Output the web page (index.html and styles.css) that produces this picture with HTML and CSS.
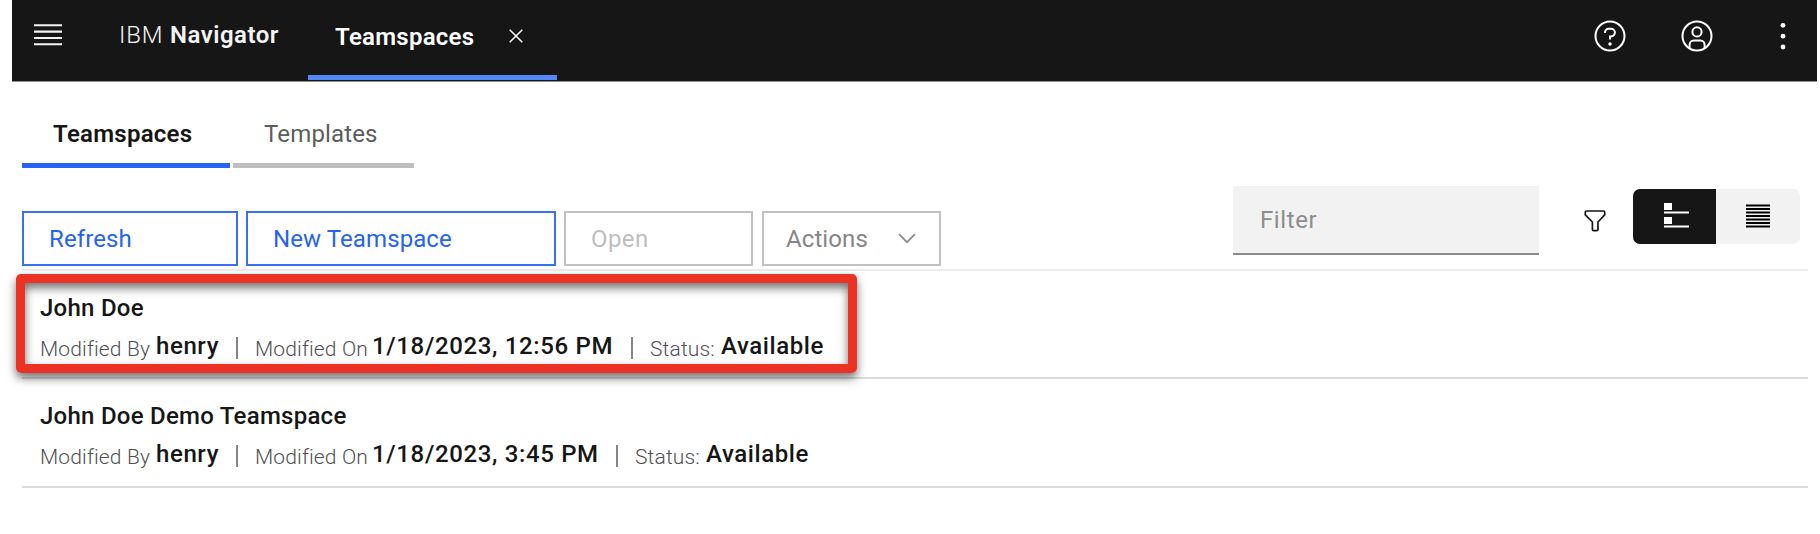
FILE: index.html
```html
<!DOCTYPE html>
<html lang="en">
<head>
<meta charset="utf-8">
<title>IBM Navigator</title>
<link rel="stylesheet" href="styles.css">
</head>
<body>
<header class="header">
  <svg class="menu" width="28" height="22" viewBox="0 0 28 22"><path d="M0 1.3h28M0 7.6h28M0 14h28M0 20.2h28" stroke="#f4f4f4" stroke-width="2.1"/></svg>
  <div class="brand"><span class="ibm">IBM</span><span class="product">Navigator</span></div>
  <div class="app-tab"><span class="app-name">Teamspaces</span>
    <svg width="14" height="14" viewBox="0 0 14 14"><path d="M.7.7l12.6 12.6M13.3.7L.7 13.3" stroke="#fff" stroke-width="1.5"/></svg>
  </div>
  <nav class="tools">
    <svg width="32" height="32" viewBox="0 0 32 32" fill="none" stroke="#fff" stroke-width="2"><circle cx="16" cy="16" r="14.5"/><path d="M11 13v-.5A3.7 3.7 0 0 1 14.7 8.8h2.4a3.8 3.8 0 0 1 0 7.6H16v3.2"/><circle cx="16" cy="24" r="1.7" fill="#fff" stroke="none"/></svg>
    <svg width="32" height="32" viewBox="0 0 32 32" fill="none" stroke="#fff" stroke-width="2"><circle cx="16" cy="16" r="14.5"/><circle cx="16" cy="11.9" r="4.6"/><path d="M8.6 28v-3.2a4.2 4.2 0 0 1 4.2-4.2h6.6a4.2 4.2 0 0 1 4.2 4.2V28"/></svg>
    <svg width="32" height="32" viewBox="0 0 32 32" fill="#fff"><circle cx="16" cy="5.3" r="2.4"/><circle cx="16" cy="16.2" r="2.4"/><circle cx="16" cy="27" r="2.4"/></svg>
  </nav>
</header>
<main class="content">
  <div class="tabs"><div class="tab active"><span>Teamspaces</span></div><div class="tab"><span>Templates</span></div></div>
  <div class="toolbar">
    <div class="buttons">
      <button class="btn refresh"><span>Refresh</span></button>
      <button class="btn create"><span>New Teamspace</span></button>
      <button class="btn open"><span>Open</span></button>
      <button class="btn actions"><span>Actions</span><svg width="18" height="11" viewBox="0 0 18 11"><path d="M1 1.2l8 8 8-8" fill="none" stroke="#8d8d8d" stroke-width="1.8"/></svg></button>
    </div>
    <div class="filter"><span>Filter</span></div>
    <svg class="funnel" width="22" height="22" viewBox="0 0 22 22"><path d="M2.5 1h17a1.2 1.2 0 0 1 1.2 1.2v2.7L14 12v7.5a1.2 1.2 0 0 1-1.2 1.2H9.6a1.2 1.2 0 0 1-1.2-1.2V12L1.3 4.9V2.2A1.2 1.2 0 0 1 2.5 1z" fill="none" stroke="#161616" stroke-width="1.7"/></svg>
    <div class="switch">
      <div class="seg on"><svg width="26" height="26" viewBox="0 0 26 26" fill="#fff"><path d="M0 0h8v7H0zM0 8.5h25v2H0zM0 14h8v7H0zM0 22.5h25v2H0z"/></svg></div>
      <div class="seg"><svg width="24" height="24" viewBox="0 0 24 24"><path d="M0 1.5h24M0 5h24M0 8.5h24M0 12h24M0 15.5h24M0 19h24M0 22.5h24" stroke="#000" stroke-width="1.9"/></svg></div>
    </div>
  </div>
  <section class="list">
    <article class="row marked">
      <h2>John Doe</h2>
      <p><small class="by">Modified By</small><b class="who">henry</b><i></i><small class="mo">Modified On</small><b class="d1">1/18/2023, 12:56 PM</b><i></i><small class="st">Status:</small><b class="av">Available</b></p>
    </article>
    <article class="row">
      <h2>John Doe Demo Teamspace</h2>
      <p><small class="by">Modified By</small><b class="who">henry</b><i></i><small class="mo">Modified On</small><b class="d2">1/18/2023, 3:45 PM</b><i></i><small class="st">Status:</small><b class="av">Available</b></p>
    </article>
  </section>
</main>
</body>
</html>
```
FILE: styles.css
```css
*, *::after { box-sizing: border-box; }
body { margin: 0; background: #fff; color: #161616; font: 24px/30px Roboto, "Open Sans", sans-serif; overflow: hidden; }
svg { display: block; flex: none; }
span, small, b { display: inline-block; white-space: nowrap; flex: none; }
.header { display: flex; height: 82px; margin: 0 3px 0 12px; background: #161616; border-bottom: 1px solid #8d8d8d; color: #f4f4f4; }
.menu { margin: 24px 0 0 22px; }
.brand { display: flex; margin: 20px 0 0 57px; width: 189px; font-weight: 600; letter-spacing: .5px; }
.ibm { font-weight: 300; width: 51px; letter-spacing: .8px; }
.app-tab { display: flex; width: 249px; height: 80px; padding: 22px 0 0 27px; border-bottom: 5px solid #5289f7; color: #fff; font-weight: 600; }
.app-name { width: 174px; letter-spacing: .25px; }
.app-tab svg { margin-top: 7px; }
.tools { display: flex; gap: 54.5px; margin: 20px 18px 0 auto; }
.content { padding: 0 12px 0 22px; }
.tabs { display: flex; gap: 3px; height: 86px; align-items: flex-end; }
.tab { height: 51px; width: 181px; padding: 2px 0 0 31px; border-bottom: 5px solid #bebebe; color: #5c5c5c; letter-spacing: .15px; }
.tab.active { width: 208px; border-color: #2563f6; color: #161616; font-weight: 600; letter-spacing: .25px; }
.toolbar { display: flex; height: 103px; border-bottom: 2px solid #ededed; }
.buttons { display: flex; gap: 8px; padding-top: 43px; }
.btn { display: flex; align-items: center; height: 55px; padding: 0 0 0 25px; background: #fff; border: 2px solid #c1c1c1; color: #bebebe; font: inherit; letter-spacing: .1px; }
.refresh, .create { border-color: #3a70f5; color: #2563f6; }
.refresh { width: 216px; }
.create { width: 310px; }
.open { width: 189px; letter-spacing: .4px; }
.actions { width: 179px; margin-left: 1px; padding-left: 22px; color: #868686; }
.actions span { width: 112px; text-align: left; }
.filter { width: 306px; height: 69px; margin: 18px 45px 0 auto; padding: 19px 0 0 27px; background: #f2f2f2; border-bottom: 2px solid #8a8a8a; color: #8d8d8d; letter-spacing: .6px; }
.funnel { margin: 42px 27px 0 0; }
.switch { display: flex; width: 167px; height: 55px; margin: 21px 8px 0 0; border-radius: 7px; overflow: hidden; background: #f2f2f2; }
.seg { width: 83px; padding: 15px 0 0 30px; }
.seg.on { background: #161616; padding: 14px 0 0 31px; }
.row { position: relative; height: 108px; padding: 22px 0 0 18px; border-bottom: 2px solid #dcdcdc; }
.row + .row { height: 109px; }
.row h2 { margin: 0; font: inherit; font-weight: 500; letter-spacing: .26px; }
.row p { display: flex; align-items: flex-start; margin: 8px 0 0; }
.row b { font-weight: 500; letter-spacing: .6px; }
.row small { font-size: 21px; color: #505050; padding-top: 3px; font-weight: 300; letter-spacing: .14px; }
.row i { width: 2px; height: 22px; margin: 6px 17px 0 0; background: #858585; }
.by { width: 116px; }
.who { width: 80px; }
.mo { width: 117px; }
.row .d1, .row .d2 { letter-spacing: .65px; }
.d1 { width: 259px; }
.d2 { width: 244px; }
.st { width: 71px; }
.marked::after { content: ""; position: absolute; left: -6px; top: 3px; width: 841px; height: 99px; border: 9px solid #ec3323; border-radius: 5px; box-shadow: 0 5px 10px rgba(0,0,0,.55), inset 0 5px 10px rgba(0,0,0,.55); }
```
